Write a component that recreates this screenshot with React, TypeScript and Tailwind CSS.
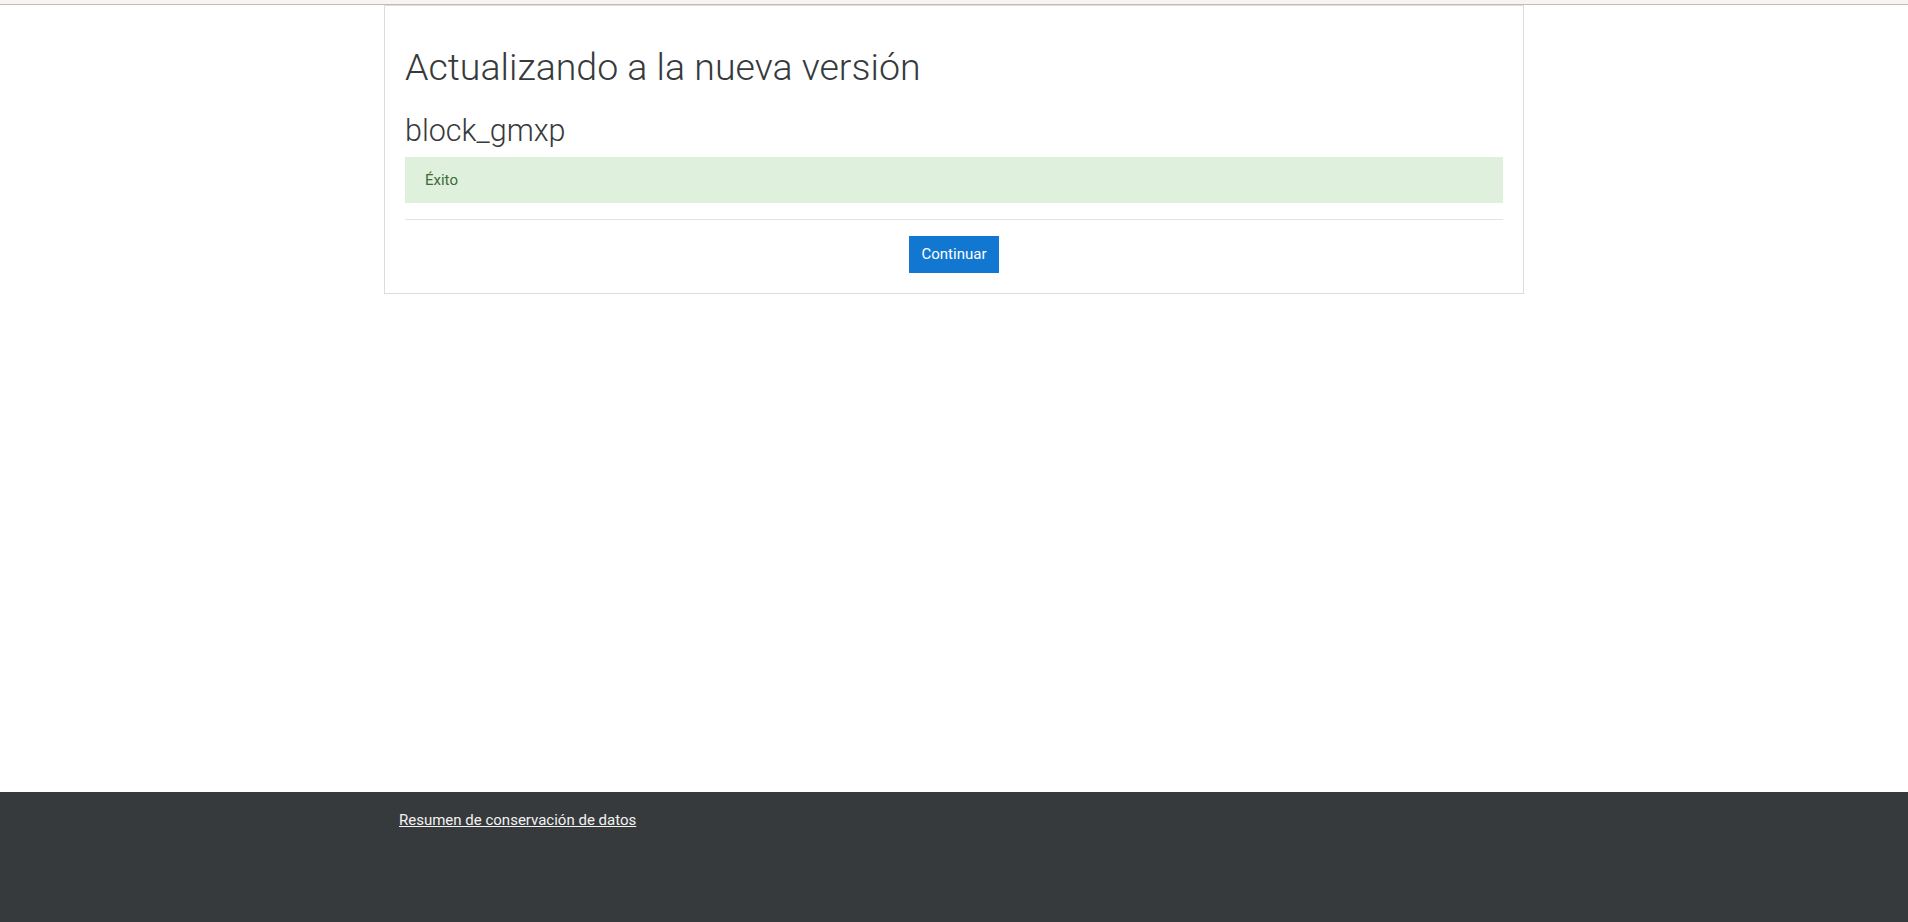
export default function App() {
    return (
        <div className="flex min-h-screen flex-col bg-white font-['Roboto',sans-serif] text-[15px] text-[#373a3c]">
            {/* Top strip of the navbar */}
            <div className="h-[5px] shrink-0 border-b border-[#c4bdb0] bg-[#f6f5f1]" />

            {/* Main card */}
            <main className="flex-1">
                <div className="mx-auto w-[1140px] border border-[#dcdcdc] p-5">
                    <h2 className="mt-[19px] mb-[8px] text-[37.5px] leading-[1.2] font-light">
                        Actualizando a la nueva versión
                    </h2>
                    <h3 className="mt-[23px] mb-[7px] text-[30.5px] leading-[1.2] font-light">block_gmxp</h3>
                    <div className="bg-[#dff0dc] px-5 py-3 leading-[1.5] text-[#3d6b39]">Éxito</div>
                    <hr className="my-4 border-t border-[#e3e3e3]" />
                    <div className="flex justify-center">
                        <button className="border border-[#1177d1] bg-[#1177d1] px-3 py-1.5 leading-[1.5] text-white">
                            Continuar
                        </button>
                    </div>
                </div>
            </main>

            {/* Footer */}
            <footer className="h-[130px] shrink-0 bg-[#373a3c]">
                <div className="mx-auto w-[1140px] px-[15px] pt-[17px]">
                    <a href="#" className="leading-[1.5] text-[#f2f2f2] underline">
                        Resumen de conservación de datos
                    </a>
                </div>
            </footer>
        </div>
    );
}
